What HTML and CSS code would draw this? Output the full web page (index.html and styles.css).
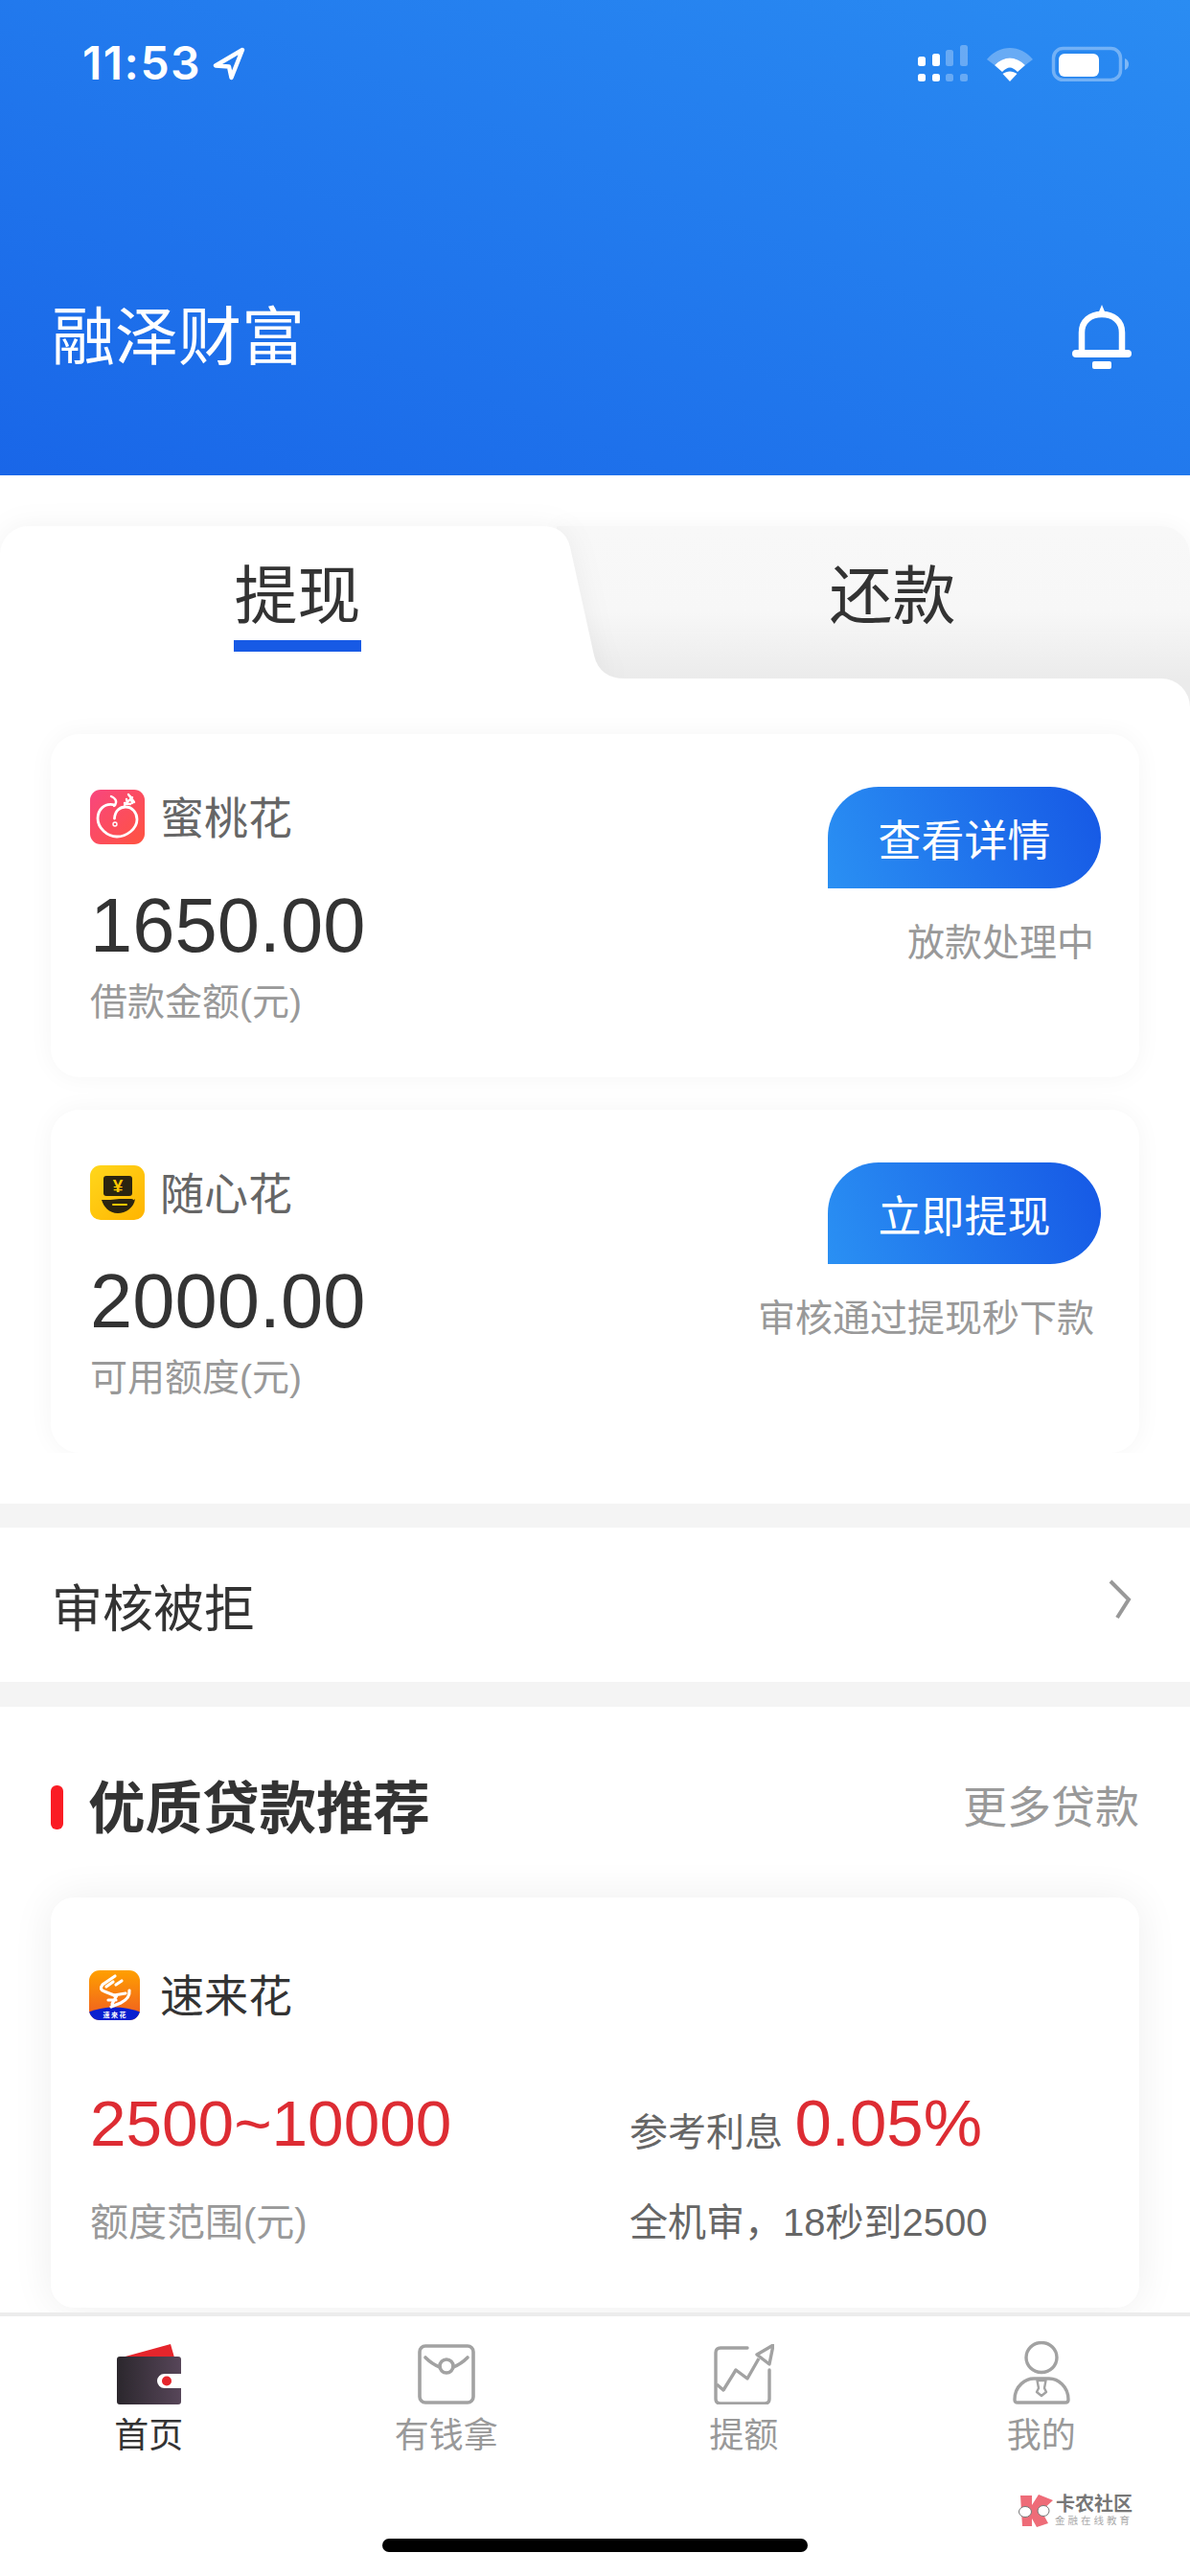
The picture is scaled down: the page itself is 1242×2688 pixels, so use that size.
FILE: index.html
```html
<!DOCTYPE html>
<html lang="zh-CN">
<head>
<meta charset="utf-8">
<title>融泽财富</title>
<link rel="stylesheet" href="styles.css">
</head>
<body>
<div class="phone">
  <header class="header">
    <div class="status">
      <div class="status-left">
        <span class="time">11:53</span>
        <svg class="loc" viewBox="0 0 34 35"><path d="M31 3 3 19.500 17 20.500 19.500 32Z" fill="none" stroke="#fff" stroke-width="4.400" stroke-linejoin="round"/></svg>
      </div>
      <svg class="status-icons" viewBox="0 0 220 38">
        <g fill="#fff">
          <rect x="0" y="30" width="8" height="8" rx="2.500"/><rect x="15" y="30" width="8" height="8" rx="2.500"/>
          <rect x="0" y="12" width="8" height="10" rx="2.500"/><rect x="15" y="9" width="8" height="13" rx="2.500"/>
        </g>
        <g fill="#fff" opacity=".3">
          <rect x="29" y="30" width="8" height="8" rx="2.500"/><rect x="44" y="30" width="8" height="8" rx="2.500"/>
          <rect x="29" y="5" width="8" height="17" rx="2.500"/><rect x="44" y="0" width="8" height="22" rx="2.500"/>
        </g>
        <path d="M72 15C85 -1 107 -1 120 15L112 21C102 11 90 11 80 21Z" fill="#fff" opacity=".3"/>
        <path d="M80 21C90 11 102 11 112 21L104 28C98 22 94 22 88 28Z" fill="#fff"/>
        <path d="M88.500 30C93 26.500 99 26.500 103.500 30L96 38Z" fill="#fff"/>
        <rect x="141.500" y="3.500" width="70" height="33" rx="10" fill="none" stroke="#fff" stroke-width="3.500" opacity=".35"/>
        <rect x="147" y="9" width="42" height="24" rx="6" fill="#fff"/>
        <path d="M216 14C219 15 220 18 220 20C220 22 219 25 216 26Z" fill="#fff" opacity=".4"/>
      </svg>
    </div>
    <div class="titlebar">
      <h1 class="brand">融泽财富</h1>
      <svg class="bell" viewBox="0 0 62 67"><path d="M10 52V29C10 17 19 10 31 10C43 10 52 17 52 29V52" fill="none" stroke="#fff" stroke-width="6.500"/><path d="M31 0 36 12H26Z" fill="#fff"/><rect x="0" y="47" width="62" height="8" rx="4" fill="#fff"/><rect x="21" y="59" width="20" height="8" rx="2" fill="#fff"/></svg>
    </div>
  </header>

  <section class="loans">
    <div class="tabs">
      <svg class="tab-shape" viewBox="0 0 660 159"><path d="M0 30A30 30 0 0 1 30 0H565Q590 0 595 22L620 135Q626 159 652 159H0Z" fill="#fff"/></svg>
      <div class="tab tab-on"><span class="tab-label">提现</span><i class="tab-line"></i></div>
      <div class="tab tab-off"><span class="tab-label">还款</span></div>
    </div>
    <div class="panel">
      <div class="card-list">
        <article class="card">
          <div class="card-main">
            <div class="app">
              <svg class="app-icon" viewBox="0 0 57 57">
                <defs><linearGradient id="peach" x1="0" y1="0" x2="1" y2="1"><stop offset="0" stop-color="#f8467f"/><stop offset="1" stop-color="#ff5340"/></linearGradient></defs>
                <rect width="57" height="57" rx="11" fill="url(#peach)"/>
                <path d="M26 16C14 13 8 22 8 30C8 40 18 49 28 49C38 49 49 41 49 31C49 24 44 18 37 18C31 18 26 22 25.500 30" fill="none" stroke="#fff" stroke-width="2.800" stroke-linecap="round"/>
                <path d="M25 17C29 13 27 9 22 7" fill="none" stroke="#fff" stroke-width="2.400" stroke-linecap="round"/>
                <path d="M36 16 44 8M38 10 39 14M42 7 44 14M36 14 42 15M40 5 46 13" stroke="#fff" stroke-width="2.400" stroke-linecap="round"/>
                <circle cx="26" cy="36" r="2" fill="none" stroke="#fff" stroke-width="1.400"/>
              </svg>
              <span class="app-name">蜜桃花</span>
            </div>
            <div class="amount">1650.00</div>
            <div class="hint">借款金额(元)</div>
          </div>
          <div class="card-side">
            <button class="action">查看详情</button>
            <div class="note">放款处理中</div>
          </div>
        </article>
        <article class="card">
          <div class="card-main">
            <div class="app">
              <svg class="app-icon" viewBox="0 0 57 57">
                <defs><linearGradient id="gold" x1="0" y1="0" x2="1" y2="1"><stop offset="0" stop-color="#ffd71c"/><stop offset="1" stop-color="#ffb400"/></linearGradient></defs>
                <rect width="57" height="57" rx="11" fill="url(#gold)"/>
                <rect x="14" y="11" width="30" height="21" rx="3" fill="#2b2410"/>
                <text x="29" y="28" class="yen" text-anchor="middle">¥</text>
                <path d="M12 36H21C25 36 27 35 31 35H43C47 35 46 40 42 40H32C36 41 44 38 47 35C46 44 37 50 29 50C20 50 14 43 12 36Z" fill="#2b2410"/>
                <path d="M24 41H38" stroke="#ffc800" stroke-width="2" stroke-linecap="round"/>
              </svg>
              <span class="app-name">随心花</span>
            </div>
            <div class="amount">2000.00</div>
            <div class="hint">可用额度(元)</div>
          </div>
          <div class="card-side">
            <button class="action">立即提现</button>
            <div class="note">审核通过提现秒下款</div>
          </div>
        </article>
      </div>
    </div>
  </section>

  <div class="rejected">
    <span class="rejected-text">审核被拒</span>
    <svg class="chevron" viewBox="0 0 26 42"><path d="M3 2 22 21 10 40" fill="none" stroke="#999" stroke-width="4"/></svg>
  </div>

  <section class="recommend">
    <div class="rec-head">
      <h2 class="rec-title">优质贷款推荐</h2>
      <span class="rec-more">更多贷款</span>
    </div>
    <article class="rec-card">
      <div class="app">
        <svg class="rec-icon" viewBox="0 0 53 52">
          <defs><linearGradient id="orange" x1="0" y1="0" x2="0" y2="1"><stop offset="0" stop-color="#ffa000"/><stop offset="1" stop-color="#ef5a22"/></linearGradient><clipPath id="rc"><rect width="53" height="52" rx="11"/></clipPath></defs>
          <g clip-path="url(#rc)">
            <rect width="53" height="52" fill="url(#orange)"/>
            <path d="M-2 44Q26 33 55 44V54H-2Z" fill="#0a1fd0"/>
            <path d="M27 6 14 15Q10 20 16 22L26 26M25 12 18 17M34 11 28 15" fill="none" stroke="#fff" stroke-width="3.200" stroke-linecap="round"/>
            <path d="M42 21Q43 29 33 34L23 38M26 26 38 24M20 31H28M29 26 24 35" fill="none" stroke="#fff" stroke-width="3.200" stroke-linecap="round"/>
            <text x="26.500" y="49" class="mini" text-anchor="middle">速 来 花</text>
          </g>
        </svg>
        <span class="rec-name">速来花</span>
      </div>
      <div class="rec-grid">
        <div class="rec-range">2500~10000</div>
        <div class="rec-rate"><span class="rate-label">参考利息</span> <span class="rate-value">0.05%</span></div>
        <div class="rec-hint">额度范围(元)</div>
        <div class="rec-desc">全机审，18秒到2500</div>
      </div>
    </article>
  </section>

  <nav class="nav">
    <div class="nav-item nav-on">
      <svg class="nav-icon" viewBox="0 0 67 63">
        <defs><linearGradient id="wallet" x1="0" y1="0" x2="1" y2="0"><stop offset="0" stop-color="#2b272d"/><stop offset="1" stop-color="#574659"/></linearGradient></defs>
        <path d="M5 14 56 0 60 14Z" fill="#e5252c"/>
        <path d="M3 13H64Q67 13 67 16V31H49.500A7.500 7.500 0 0 0 49.500 46H67V60Q67 63 64 63H3Q0 63 0 60V16Q0 13 3 13Z" fill="url(#wallet)"/>
        <circle cx="52" cy="38.500" r="5" fill="#e5252c"/>
      </svg>
      <span>首页</span>
    </div>
    <div class="nav-item">
      <svg class="nav-icon" viewBox="0 0 60 63" fill="none" stroke="#a2a2a2" stroke-width="3.600">
        <rect x="2" y="2" width="56" height="59" rx="6"/>
        <path d="M8 14Q15 21 23 24M37 24Q45 21 52 14" stroke-linecap="round"/>
        <circle cx="30" cy="23" r="7"/>
      </svg>
      <span>有钱拿</span>
    </div>
    <div class="nav-item">
      <svg class="nav-icon" viewBox="0 0 63 63" fill="none" stroke="#a2a2a2" stroke-width="3.400" stroke-linejoin="round">
        <path d="M35 4H7Q2 4 2 9V57Q2 62 7 62H53Q58 62 58 57V27" stroke-linecap="round"/>
        <path d="M3 42 10 48 23 27 35 36 47 15"/>
        <path d="M62 1 45 11 58 21Z"/>
      </svg>
      <span>提额</span>
    </div>
    <div class="nav-item">
      <svg class="nav-icon" viewBox="0 0 60 66" fill="none" stroke="#a2a2a2" stroke-width="3.400" stroke-linejoin="round">
        <ellipse cx="30" cy="17" rx="16" ry="15.500"/>
        <path d="M2 61C2 46 14 39 22 39H38C47 39 58 47 58 61Q58 64 55 64H5Q2 64 2 61Z"/>
        <path d="M25.500 41H34.500L33 49 35 53 30 57 25 53 27 49Z" stroke-width="2.400"/>
      </svg>
      <span>我的</span>
    </div>
  </nav>

  <div class="watermark">
    <svg class="wm-logo" viewBox="0 0 38 34">
      <path d="M3 1H15V11L22 0 37 6 25 17 32 30 20 34 15 25V33H5Z" fill="#ee6c78"/>
      <ellipse cx="8" cy="18" rx="6.500" ry="5.500" fill="#fff" stroke="#777" stroke-width="1"/>
      <ellipse cx="27" cy="17" rx="6" ry="5.500" fill="#fff" stroke="#777" stroke-width="1"/>
    </svg>
    <div class="wm-text"><b>卡农社区</b><small>金融在线教育</small></div>
  </div>
  <div class="home-bar"></div>
</div>
</body>
</html>
```
FILE: styles.css
```css
* { box-sizing: border-box; margin: 0; padding: 0; }
html, body { width: 1242px; height: 2688px; background: #fff; overflow: hidden; }
body { font-family: "Liberation Sans", "Noto Sans CJK SC", sans-serif; color: #333; }
.phone { position: relative; width: 1242px; height: 2688px; display: flex; flex-direction: column; overflow: hidden; background: #f4f4f4; }

/* header */
.header { position: relative; z-index: 3; height: 496px; flex: none; display: flex; flex-direction: column; justify-content: space-between; padding-bottom: 105px; background: linear-gradient(22deg, #1966e8 0%, #2a8cf2 100%); color: #fff; }
.status { height: 132px; display: flex; align-items: center; justify-content: space-between; padding: 0 64px 0 86px; }
.status-left { display: flex; align-items: center; gap: 12px; }
.time { font: 600 48px/70px Inter, sans-serif; letter-spacing: 1.500px; }
.loc { width: 34px; height: 35px; }
.status-icons { width: 220px; height: 38px; }
.titlebar { height: 80px; display: flex; align-items: center; justify-content: space-between; padding: 0 61px 0 54px; }
.brand { padding-top: 2px; font-size: 66px; line-height: 80px; font-weight: 400; }
.bell { width: 62px; height: 67px; }

/* tabs */
.loans { height: 1073px; flex: none; padding-top: 53px; background: #fff; }
.tabs { position: relative; height: 159px; display: grid; grid-template-columns: 621px 621px; }
.tab-shape { position: absolute; z-index: 1; left: 0; top: 0; width: 660px; height: 159px; filter: drop-shadow(0 0 14px rgba(0, 0, 0, .05)); }
.tab { display: flex; flex-direction: column; align-items: center; }
.tab-on { position: relative; z-index: 2; }
.tab-off { height: 189px; margin-left: -40px; padding: 0 0 0 40px; border-radius: 0 30px 0 0; background: linear-gradient(180deg, #f8f8f8 0, #f7f7f7 90px, #ebebeb 159px); box-shadow: 0 0 24px rgba(0, 0, 0, .04); }
.tab-label { position: relative; z-index: 2; margin-top: 36px; font-size: 66px; line-height: 74px; }
.tab-line { display: block; width: 133px; height: 12px; margin-top: 9px; background: #175ae5; }

.panel { position: relative; z-index: 2; height: 861px; background: #fff; border-radius: 0 30px 0 0; }
.card-list { height: 808px; overflow: hidden; padding: 58px 53px 0; display: flex; flex-direction: column; gap: 34px; }
.card { flex: none; height: 358px; padding: 55px 40px 0 41px; display: flex; justify-content: space-between; background: #fff; border-radius: 30px; box-shadow: 0 0 26px rgba(0, 0, 0, .045); }
.card-main { padding-top: 3px; }
.app { display: flex; align-items: center; height: 57px; }
.app-icon { width: 57px; height: 57px; flex: none; }
.app-name { margin-left: 16px; padding-top: 4px; font-size: 46px; line-height: 57px; color: #666; }
.yen { font: 700 19px "Liberation Sans", sans-serif; fill: #ffc800; }
.amount { margin-top: 40px; font-size: 79.500px; line-height: 90px; color: #333; }
.hint { margin-top: 10px; font-size: 39px; line-height: 50px; color: #999; }
.card-side { display: flex; flex-direction: column; align-items: flex-end; }
.action { width: 285px; height: 106px; border: 0; border-radius: 53px 53px 53px 0; background: linear-gradient(70deg, #2a90f3 0%, #1658e5 100%); color: #fff; font-family: inherit; font-size: 45px; }
.note { margin: 32px 7px 0 0; font-size: 39px; line-height: 50px; color: #999; }

/* rejected row */
.rejected { height: 161px; flex: none; margin-top: 25px; display: flex; align-items: center; justify-content: space-between; padding: 0 60px 0 54px; background: #fff; }
.rejected-text { padding-top: 10px; font-size: 53px; line-height: 70px; color: #333; }
.chevron { width: 26px; height: 42px; margin-bottom: 12px; }

/* recommend */
.recommend { height: 632px; flex: none; margin-top: 26px; padding: 65px 53px 0; background: #fff; overflow: hidden; }
.rec-head { height: 80px; display: flex; align-items: center; justify-content: space-between; }
.rec-title { position: relative; padding: 4px 0 0 39px; font-size: 59.500px; line-height: 80px; font-weight: 700; color: #333; }
.rec-title::before { content: ""; position: absolute; left: 0; top: 19px; width: 13px; height: 46px; border-radius: 6px; background: #fa1c24; }
.rec-more { font-size: 46px; line-height: 60px; color: #999; }
.rec-card { height: 428px; margin-top: 54px; padding: 73px 40px 0 40px; background: #fff; border-radius: 24px; box-shadow: 0 0 44px rgba(0, 0, 0, .07); }
.rec-icon { width: 53px; height: 52px; flex: none; }
.rec-name { margin-left: 21px; padding-top: 2px; font-size: 46px; line-height: 58px; color: #333; }
.mini { font: 700 7px "Noto Sans CJK SC", sans-serif; fill: #fff; }
.rec-grid { display: grid; grid-template-columns: 563px 1fr; grid-template-rows: 90px 50px; row-gap: 33px; margin-top: 61px; padding-left: 1px; align-items: baseline; }
.rec-range { font-size: 67.500px; line-height: 90px; color: #dd2c33; }
.rec-rate { line-height: 90px; white-space: nowrap; }
.rate-label { font-size: 40px; color: #666; }
.rate-value { margin-left: 8px; font-size: 69px; color: #dd2c33; }
.rec-hint { font-size: 40px; line-height: 50px; color: #999; }
.rec-desc { font-size: 40px; line-height: 50px; color: #666; white-space: nowrap; }

/* nav */
.nav { flex: 1; display: grid; grid-template-columns: repeat(4, 1fr); padding-top: 26px; background: #fff; border-top: 4px solid #ececec; }
.nav-item { display: flex; flex-direction: column; align-items: center; font-size: 36px; line-height: 50px; color: #999; }
.nav-on { color: #333; }
.nav-icon { height: 63px; width: auto; margin: 3px 0 8px; }
.nav-item:last-child .nav-icon { height: 66px; margin-top: 0; }

/* overlays */
.watermark { position: absolute; left: 1062px; top: 2602px; display: flex; align-items: center; gap: 1px; }
.wm-logo { width: 38px; height: 34px; }
.wm-text { display: flex; flex-direction: column; align-items: flex-end; }
.wm-text b { font-size: 20px; line-height: 22px; color: #777; }
.wm-text small { font-size: 10.500px; line-height: 13px; color: #aaa; letter-spacing: 3px; }
.home-bar { position: absolute; left: 399px; bottom: 25px; width: 444px; height: 14px; border-radius: 7px; background: #000; }
```
